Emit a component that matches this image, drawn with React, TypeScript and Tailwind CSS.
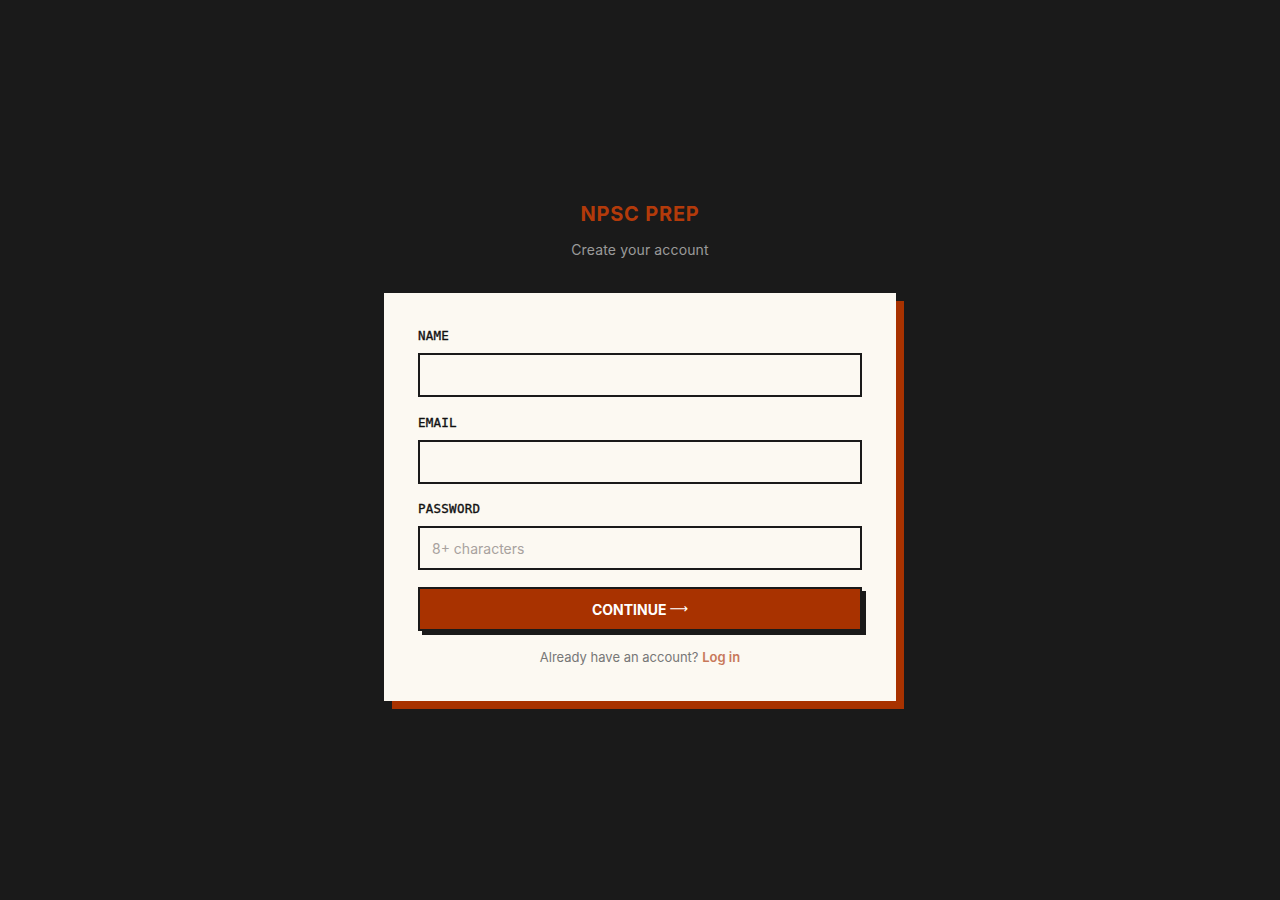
import React from "react";

const labelCls =
  "block text-[12.5px] leading-4 font-medium text-[#111111] pt-px mb-[9px] tracking-[0.02em] [-webkit-text-stroke:0.35px_#111111] font-['DejaVu_Sans_Mono','Liberation_Mono',monospace]";
const inputCls =
  "block w-full h-11 border-2 border-[#1a1a1a] bg-[#fcf9f2] px-3 text-[14px] text-[#1a1a1a] placeholder-[#a8a29e] outline-none font-['Inter','Noto_Sans',sans-serif]";

function Field({ label, placeholder, type, first }: { label: string; placeholder?: string; type?: string; first?: boolean }) {
  return (
    <div className={first ? "" : "mt-[16.5px]"}>
      <label className={labelCls}>{label}</label>
      <input className={inputCls} placeholder={placeholder} type={type ?? "text"} />
    </div>
  );
}

export default function App() {
  return (
    <div className="min-h-screen bg-[#1a1a1a] flex flex-col items-center justify-center font-['Inter','Noto_Sans',sans-serif]">
      <h1 className="text-[20px] leading-7 font-bold text-[#b33a0a] tracking-[0.04em] mt-px">NPSC PREP</h1>
      <p className="mt-3 text-[14px] leading-5 text-[#9a9a9a] tracking-[0.01em]">Create your account</p>
      <div className="mt-[33px] w-[512px] bg-[#fcf9f2] p-[34px] shadow-[8px_8px_0_0_#a83200]">
        <Field label="NAME" first />
        <Field label="EMAIL" />
        <Field label="PASSWORD" placeholder="8+ characters" type="password" />
        <button className="mt-[17px] w-full h-11 bg-[#a83200] border-2 border-[#1a1a1a] shadow-[4px_4px_0_0_#1a1a1a] text-white text-[14px] font-bold flex items-center justify-center gap-[3px]">
          <span>CONTINUE</span>
          <span className="font-normal text-[13px] font-['DejaVu_Sans',sans-serif]">⟶</span>
        </button>
        <p className="mt-4 text-center text-[13px] leading-5 text-[#777777]">
          Already have an account? <span className="font-semibold text-[#c8785a]">Log in</span>
        </p>
      </div>
    </div>
  );
}
